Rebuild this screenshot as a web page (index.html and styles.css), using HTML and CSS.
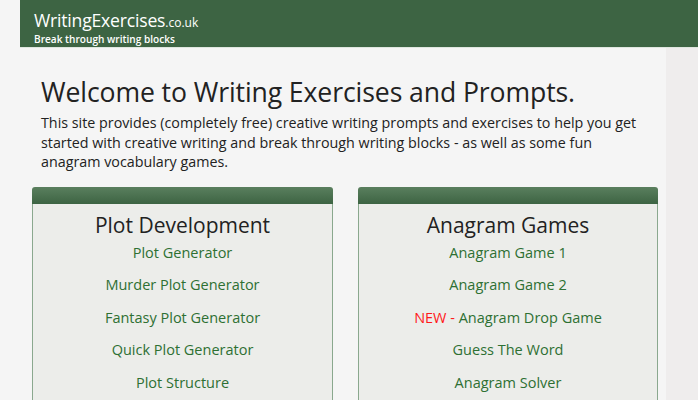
FILE: index.html
```html
<!DOCTYPE html>
<html>
<head>
<meta charset="utf-8">
<link rel="stylesheet" href="styles.css">
</head>
<body>
<div class="wrap">
  <header class="site-header">
    <div class="logo"><span class="logo-main">WritingExercises</span><span class="logo-tld">.co.uk</span></div>
    <div class="tagline">Break through writing blocks</div>
  </header>
  <div class="row">
    <main class="content">
      <h1 class="title">Welcome to Writing Exercises and Prompts.</h1>
      <p class="intro">This site provides (completely free) creative writing prompts and exercises to help you get started with creative writing and break through writing blocks - as well as some fun anagram vocabulary games.</p>
      <div class="cards">
        <section class="card">
          <div class="card-top"></div>
          <div class="card-body">
            <h2 class="card-title">Plot Development</h2>
            <a class="link">Plot Generator</a>
            <a class="link">Murder Plot Generator</a>
            <a class="link">Fantasy Plot Generator</a>
            <a class="link">Quick Plot Generator</a>
            <a class="link">Plot Structure</a>
          </div>
        </section>
        <section class="card">
          <div class="card-top"></div>
          <div class="card-body">
            <h2 class="card-title">Anagram Games</h2>
            <a class="link">Anagram Game 1</a>
            <a class="link">Anagram Game 2</a>
            <a class="link"><span class="new">NEW - </span>Anagram Drop Game</a>
            <a class="link">Guess The Word</a>
            <a class="link">Anagram Solver</a>
          </div>
        </section>
      </div>
    </main>
    <aside class="side"></aside>
  </div>
</div>
</body>
</html>
```
FILE: styles.css
```css
html, body {
  margin: 0;
  padding: 0;
}
body {
  background: #f5f5f5;
  font-family: "Open Sans", "Noto Sans", sans-serif;
  color: #222;
  overflow: hidden;
}
.wrap {
  margin-left: 20px;
}
.site-header {
  background: #3d6443;
  height: 48px;
  box-sizing: border-box;
  padding: 10px 0 0 14px;
  color: #fff;
  border-bottom: 1px solid #dfe6df;
}
.logo {
  line-height: 20px;
  white-space: nowrap;
}
.logo-main {
  font-size: 17.6px;
  letter-spacing: -0.2px;
}
.logo-tld {
  font-size: 12px;
}
.tagline {
  font-size: 10.1px;
  font-weight: 600;
  line-height: 12px;
}
.row {
  display: flex;
}
.content {
  width: 646px;
  flex: none;
  box-sizing: border-box;
  padding: 27px 8px 0 12px;
}
.side {
  flex: 1;
  background: #efeded;
  height: 360px;
}
.title {
  font-weight: 400;
  font-size: 26.6px;
  line-height: 34px;
  margin: 0 0 4px 9px;
  color: #222;
  letter-spacing: -0.1px;
}
.intro {
  font-size: 14.3px;
  line-height: 19.6px;
  max-width: 598px;
  margin: 0 0 15px 9px;
  color: #222;
}
.cards {
  display: flex;
  gap: 25px;
}
.card {
  width: 301px;
  flex: none;
}
.card:last-child {
  width: 300px;
}
.card-top {
  height: 17px;
  border-radius: 3px 3px 0 0;
  background: linear-gradient(#5a7f5e, #3d6443);
}
.card-body {
  background: #ecedea;
  border: 1px solid #8aa88e;
  border-top: none;
  height: 300px;
  display: flex;
  flex-direction: column;
  align-items: center;
  padding-top: 7px;
}
.card-title {
  font-weight: 400;
  font-size: 21px;
  line-height: 28px;
  margin: 0 0 -2px;
  color: #222;
}
.link {
  color: #2e7033;
  font-size: 14.5px;
  line-height: 32.5px;
}
.new {
  color: #ff1a1a;
}
```
